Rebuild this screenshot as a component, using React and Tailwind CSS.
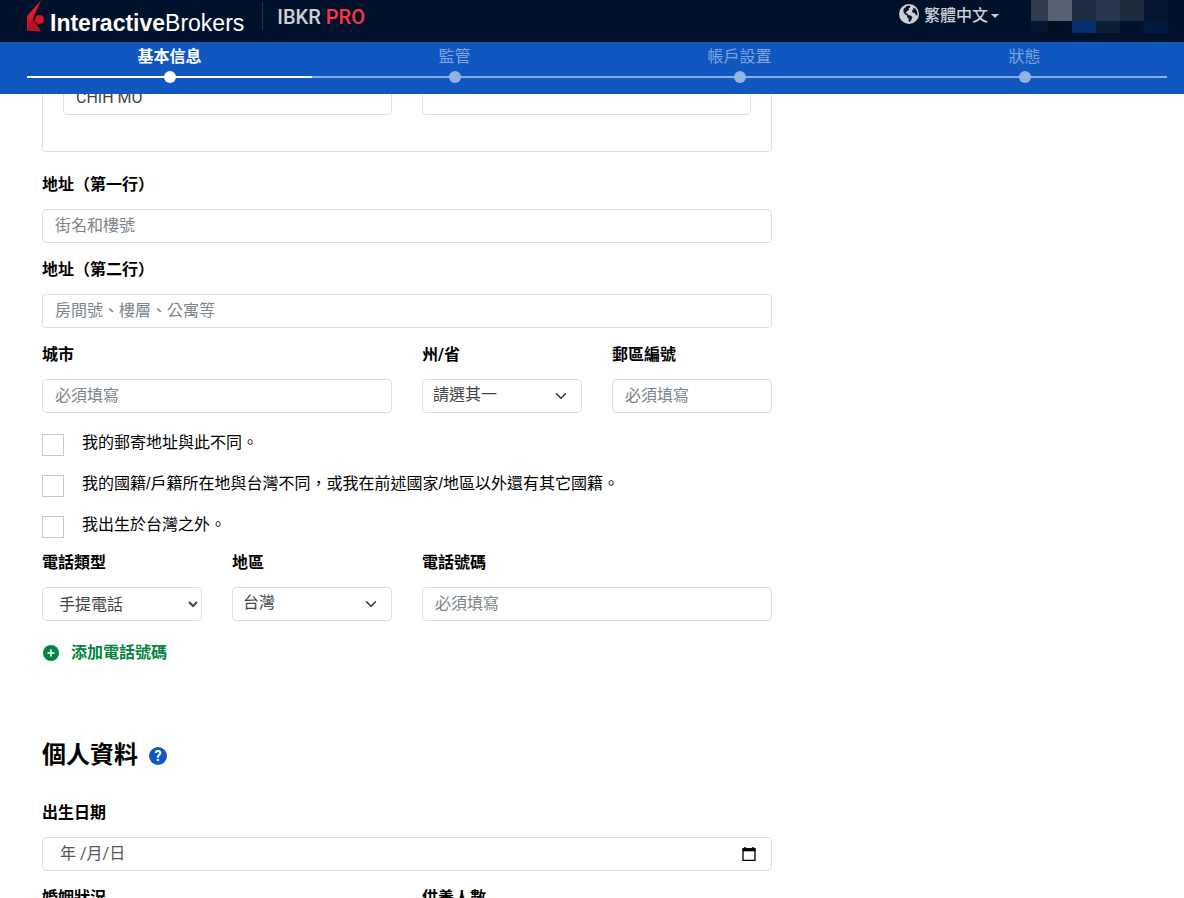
import React, { useState } from 'react';
import { FiChevronDown } from 'react-icons/fi';

const STEPS = ['基本信息', '監管', '帳戶設置', '狀態'];

const CHECKS = [
  { id: 'mailing', text: '我的郵寄地址與此不同。' },
  { id: 'citizenship', text: '我的國籍/戶籍所在地與台灣不同，或我在前述國家/地區以外還有其它國籍。' },
  { id: 'birthplace', text: '我出生於台灣之外。' },
];

const inputClasses =
  'block h-[34px] w-full rounded border border-[#dedede] bg-white px-3 pb-0.5 text-base text-[#444] placeholder:text-[#7d858c] focus:outline-none focus:border-[#1157c0]';

const LogoMark = () => (
  <svg className="h-8 w-[17px]" viewBox="0 0 17 32" aria-hidden="true">
    <path d="M14 0 0 16v15L8.500 13z" fill="#e01a29" />
    <path d="M0 31 6 18.500 14 31z" fill="#b01124" />
    <path d="M0 31V17l6 1.500z" fill="#cc1526" />
    <circle cx="12.500" cy="19.500" r="4.500" fill="#d81222" />
  </svg>
);

const GlobeIcon = () => (
  <svg className="h-5 w-5" viewBox="0 0 20 20" aria-hidden="true">
    <circle cx="10" cy="10" r="10" fill="currentColor" />
    <path
      d="M7.500 2.200 10.500 1.500 11.500 3 9.500 4.500 10 6 8 7.200 6.500 9.200 8.500 9.600 9 11 11.500 11.600 13.500 13 12.500 15.500 10.800 18 9.800 17.500 9.600 14.500 8 13 8.200 11.500 6 10.500 4.500 8 4.600 5z"
      fill="#00122b"
    />
    <path d="M14 3.500 16.500 4.800 18.300 8 18.300 11.500 16.800 11 15.800 9 13.500 8.500 13 6.500 14.500 5.500z" fill="#00122b" />
  </svg>
);

const PlusIcon = () => (
  <svg className="h-4 w-4" viewBox="0 0 16 16" aria-hidden="true">
    <circle cx="8" cy="8" r="8" fill="currentColor" />
    <path d="M8 5v6M5 8h6" stroke="#fff" strokeWidth="1.600" strokeLinecap="round" />
  </svg>
);

const Field = ({ id, label, className = '', children }) => (
  <div className={className}>
    <label htmlFor={id} className="mb-3 block text-base leading-6 font-bold text-black">
      {label}
    </label>
    {children}
  </div>
);

const TextField = ({ id, label, placeholder, className }) => (
  <Field id={id} label={label} className={className}>
    <input id={id} type="text" placeholder={placeholder} className={inputClasses} />
  </Field>
);

const ComboField = ({ id, label, option, className }) => (
  <Field id={id} label={label} className={className}>
    <div className="relative">
      <select
        id={id}
        className="block h-[34px] w-full appearance-none rounded border border-[#dedede] bg-white px-2.5 pb-0.5 text-base text-[#444]"
      >
        <option>{option}</option>
      </select>
      <FiChevronDown className="pointer-events-none absolute top-2 right-3 h-[18px] w-[18px] text-[#333]" />
    </div>
  </Field>
);

const RedactedUser = () => (
  <div className="grid grid-cols-[17px_24px_24px_24px_24px_24px] grid-rows-[21px_12px]" aria-hidden="true">
    <span className="bg-[#2e3a50]" />
    <span className="bg-[#566273]" />
    <span className="bg-[#1f2d43]" />
    <span className="bg-[#28364b]" />
    <span className="bg-[#1d2b3e]" />
    <span className="bg-[#04162f]" />
    <span className="bg-[#04162f]" />
    <span className="bg-[#000f24]" />
    <span className="bg-[#082f70]" />
    <span className="bg-[#0b1e34]" />
    <span className="bg-[#001230]" />
    <span className="bg-[#001a3b]" />
  </div>
);

const Header = () => (
  <header className="flex h-[42px] shrink-0 items-start justify-between bg-[#00122b] pr-4 pl-[27px]">
    <div className="flex items-start">
      <a href="#" className="flex items-start gap-1.5">
        <LogoMark />
        <span className="pt-[9px] font-['Liberation_Sans',sans-serif] text-[23px] leading-7 text-white">
          <b>Interactive</b>Brokers
        </span>
      </a>
      <div className="mt-0.5 ml-[18px] h-7 w-px bg-[#263449]" />
      <div className="ml-3.5 pt-[5px] text-xl leading-6 font-medium text-[#ccd0d5]">
        IBKR <span className="text-[#ff3347]">PRO</span>
      </div>
    </div>
    <div className="flex items-start gap-8">
      <button type="button" className="flex items-start gap-[5px] pt-1 text-base leading-6 text-[#ccd0d5]">
        <GlobeIcon />
        <span className="flex items-center gap-[3px] font-medium">
          繁體中文
          <span className="border-x-4 border-t-4 border-x-transparent border-t-[#ccd0d5]" />
        </span>
      </button>
      <RedactedUser />
    </div>
  </header>
);

const StepNav = () => (
  <nav className="h-[52px] shrink-0 bg-[#1157c0] pr-[17px] pl-[27px]">
    <ol className="grid grid-cols-4">
      {STEPS.map((step, index) => (
        <li
          key={step}
          className={`relative flex h-9 justify-center border-b-2 pt-[3px] text-base leading-6 ${
            index === 0 ? 'border-white font-bold text-white' : 'border-[#8fafe2] text-[#7fa5df]'
          }`}
        >
          {step}
          <span
            className={`absolute -bottom-[7px] h-3 w-3 rounded-full ${index === 0 ? 'bg-white' : 'bg-[#94b3e5]'}`}
          />
        </li>
      ))}
    </ol>
  </nav>
);

const App = () => {
  const [checked, setChecked] = useState({});

  const toggle = (id) => setChecked((prev) => ({ ...prev, [id]: !prev[id] }));

  return (
    <div
      lang="zh-Hant"
      className="flex h-screen flex-col bg-white font-[Roboto,'Noto_Sans_CJK_TC',sans-serif] text-base text-black"
    >
      <Header />
      <StepNav />

      <main className="min-h-0 flex-1 overflow-hidden px-[42px]">
        <form className="max-w-[730px]">
          {/* Name panel, scrolled partly under the step bar */}
          <div className="-mt-5 grid grid-cols-2 gap-[30px] rounded border border-[#dedede] px-5 pt-1.5 pb-9">
            <input type="text" aria-label="名字" defaultValue="CHIH MO" className={inputClasses} />
            <input type="text" aria-label="中間名" className={inputClasses} />
          </div>

          <div className="mt-[21px] grid grid-cols-4 gap-x-[30px] gap-y-[15px]">
            <TextField id="street1" label="地址（第一行）" placeholder="街名和樓號" className="col-span-4" />
            <TextField id="street2" label="地址（第二行）" placeholder="房間號、樓層、公寓等" className="col-span-4" />
            <TextField id="city" label="城市" placeholder="必須填寫" className="col-span-2" />
            <ComboField id="state" label="州/省" option="請選其一" />
            <TextField id="zip" label="郵區編號" placeholder="必須填寫" />
          </div>

          <div className="mt-[18px] flex flex-col gap-4 font-['Liberation_Sans','Noto_Sans_CJK_TC',sans-serif]">
            {CHECKS.map(({ id, text }) => (
              <label key={id} className="flex items-start gap-[18px] leading-6">
                <input
                  type="checkbox"
                  checked={!!checked[id]}
                  onChange={() => toggle(id)}
                  className="mt-[3px] h-[22px] w-[22px] shrink-0 appearance-none border border-[#cbc8c4] bg-white checked:bg-[#1157c0]"
                />
                {text}
              </label>
            ))}
          </div>

          <div className="mt-[13px] grid grid-cols-4 gap-x-[30px]">
            <Field id="phoneType" label="電話類型">
              <select
                id="phoneType"
                className="block h-[34px] w-full rounded border border-[#dedede] bg-white pl-3 text-base text-[#444]"
              >
                <option>手提電話</option>
              </select>
            </Field>
            <ComboField id="phoneRegion" label="地區" option="台灣" />
            <TextField id="phone" label="電話號碼" placeholder="必須填寫" className="col-span-2" />
          </div>

          <button type="button" className="mt-5 flex items-center gap-3 pl-px leading-6 font-bold text-[#048341]">
            <PlusIcon />
            添加電話號碼
          </button>

          <div className="mt-[74px] flex items-center gap-[11px]">
            <h2 className="text-2xl leading-8 font-bold">個人資料</h2>
            <button
              type="button"
              aria-label="說明"
              className="mt-0.5 flex h-[18px] w-[18px] items-center justify-center rounded-full bg-[#1157c0] text-sm leading-none font-bold text-white"
            >
              ?
            </button>
          </div>

          <div className="mt-[30px] grid grid-cols-2 gap-x-[30px] gap-y-[15px]">
            <Field id="birthDate" label="出生日期" className="col-span-2">
              <div className="relative">
                <input
                  id="birthDate"
                  type="text"
                  placeholder="年 /月/日"
                  className="block h-[34px] w-full rounded border border-[#dedede] bg-white px-[17px] pb-0.5 text-base placeholder:text-[#555]"
                />
                <button type="button" aria-label="選擇日期" className="absolute top-2.5 right-4">
                  <svg className="h-3.5 w-3.5" viewBox="0 0 14 14" aria-hidden="true">
                    <path d="M3 0v2M11 0v2" stroke="#000" strokeWidth="1.500" />
                    <path d="M1 2h12v11.300H1z" fill="none" stroke="#000" strokeWidth="1.300" />
                    <path d="M.500 1.300h13v3H.500z" fill="#000" />
                  </svg>
                </button>
              </div>
            </Field>
            <Field id="marital" label="婚姻狀況">
              <select id="marital" className={inputClasses}>
                <option>請選其一</option>
              </select>
            </Field>
            <TextField id="dependents" label="供養人數" placeholder="必須填寫" />
          </div>
        </form>
      </main>
    </div>
  );
};

export default App;
